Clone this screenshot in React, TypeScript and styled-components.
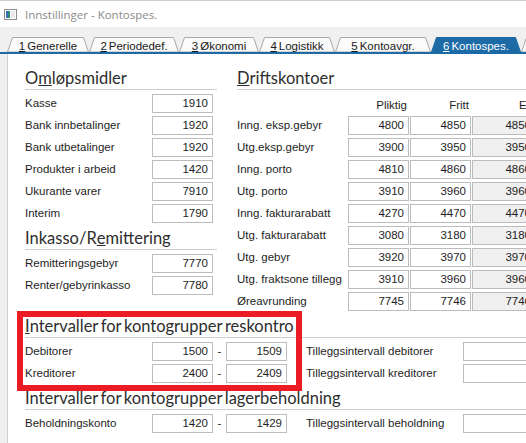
import React from 'react';
import styled, { createGlobalStyle } from 'styled-components';

const GlobalStyle = createGlobalStyle`
  html, body {
    margin: 0;
    padding: 0;
    background: #f0f0f0;
  }
  body {
    font-family: "Liberation Sans", Arial, sans-serif;
  }
`;

const BLUE = '#1c6aa6';

const Window = styled.div`
  width: 526px;
  height: 443px;
  overflow: hidden;
  background: #f0f0f0;
  display: flex;
  flex-direction: column;
`;

const TitleBar = styled.div`
  height: 26px;
  flex: none;
  background: #fff;
  border-top: 1px solid #c9ced6;
  display: flex;
  align-items: center;
  padding-left: 4px;
  gap: 8px;
  font-family: "Open Sans", "Noto Sans", sans-serif;
  font-size: 11.5px;
  color: #8a8a8a;
`;

const TabStrip = styled.div`
  height: 25px;
  flex: none;
  display: flex;
  align-items: flex-end;
  padding-left: 7px;
  border-bottom: 2px solid ${BLUE};
  white-space: nowrap;
`;

const TabShape = styled.svg`
  position: absolute;
  inset: 0;
  width: 100%;
  height: 100%;
  z-index: 0;
`;

const TabWrap = styled.div<{ $w: number; $active?: boolean }>`
  position: relative;
  width: ${(p) => p.$w}px;
  height: 15px;
  flex: none;
  display: flex;
  align-items: center;
  justify-content: center;
  font-size: 11.5px;
  color: ${(p) => (p.$active ? '#fff' : '#1a1a1a')};
  span {
    position: relative;
    z-index: 1;
    padding-top: 2px;
  }
  u {
    margin-right: 2px;
  }
`;

const Tab = ({ w, active, num, text }: { w: number; active?: boolean; num: string; text: string }) => (
  <TabWrap $w={w} $active={active}>
    <TabShape viewBox={`0 0 ${w} 15`} preserveAspectRatio="none">
      <polygon
        points={`0.5,15 5.5,0.5 ${w - 5.5},0.5 ${w - 0.5},15`}
        fill={active ? BLUE : '#fbfbfb'}
        stroke={active ? BLUE : '#a9a9a9'}
        strokeWidth="1"
      />
    </TabShape>
    <span>
      <u>{num}</u>
      {text}
    </span>
  </TabWrap>
);

const Panel = styled.div`
  flex: 1;
  background: #fff;
  margin-left: 7px;
  border-left: 1px solid #d0d0d0;
  padding: 12px 0 0 17px;
  color: #1e1e1e;
  font-size: 11.5px;
  width: 560px;
`;

const TopGrid = styled.div`
  display: flex;
  gap: 20px;
`;

const LeftCol = styled.div`
  width: 192px;
  flex: none;
`;

const RightCol = styled.div`
  flex: 1;
`;

const Heading = styled.div`
  height: 24px;
  box-sizing: border-box;
  border-bottom: 1px solid #cfcfcf;
  margin-bottom: 4px;
  font-family: Lato, "Open Sans", sans-serif;
  font-size: 16.5px;
  word-spacing: -1.5px;
  color: #2e2e2e;
  display: flex;
  align-items: flex-end;
  padding-bottom: 1px;
  white-space: pre;
`;

const Row = styled.div`
  height: 22px;
  display: flex;
  align-items: flex-start;
  white-space: nowrap;
`;

const Label = styled.div<{ $w: number }>`
  width: ${(p) => p.$w}px;
  flex: none;
  line-height: 19px;
`;

const Field = styled.div<{ $w?: number; $grey?: boolean }>`
  width: ${(p) => p.$w ?? 61}px;
  height: 19px;
  flex: none;
  box-sizing: border-box;
  border: 1px solid #bcbcbc;
  background: ${(p) => (p.$grey ? '#f0f0f0' : '#fff')};
  text-align: right;
  padding-right: 4px;
  line-height: 17px;
`;

const Cells = styled.div`
  display: flex;
  gap: 1px;
`;

const ColHead = styled.div<{ $lead?: number }>`
  width: 61px;
  flex: none;
  box-sizing: border-box;
  text-align: ${(p) => (p.$lead ? 'left' : 'right')};
  padding: 2px 2px 0 ${(p) => p.$lead ?? 0}px;
  line-height: 19px;
`;

const Dash = styled.div`
  width: 13px;
  flex: none;
  text-align: center;
  line-height: 19px;
`;

const ExtraLabel = styled.div`
  width: 157px;
  margin-left: 19px;
  flex: none;
  line-height: 19px;
`;

const Section = styled.div`
  position: relative;
`;

const Highlight = styled.div`
  position: absolute;
  left: -8px;
  top: -3px;
  width: 285px;
  height: 80px;
  box-sizing: border-box;
  border: 6px solid #ec1c24;
  pointer-events: none;
`;

const AppIcon = () => (
  <svg width="13" height="11" viewBox="0 0 13 11">
    <rect x="0.5" y="0.5" width="12" height="10" fill="#fff" stroke="#8c8c8c" />
    <rect x="2" y="2" width="4" height="7" fill="#2f8a7a" />
    <rect x="2" y="2" width="2" height="7" fill="#3d6fb8" />
    <rect x="7" y="2" width="4" height="7" fill="#e8e8e8" />
  </svg>
);

const omlop = [
  ['Kasse', '1910'],
  ['Bank innbetalinger', '1920'],
  ['Bank utbetalinger', '1920'],
  ['Produkter i arbeid', '1420'],
  ['Ukurante varer', '7910'],
  ['Interim', '1790'],
];

const inkasso = [
  ['Remitteringsgebyr', '7770'],
  ['Renter/gebyrinkasso', '7780'],
];

const drift = [
  ['Inng. eksp.gebyr', '4800', '4850', '4850'],
  ['Utg.eksp.gebyr', '3900', '3950', '3950'],
  ['Inng. porto', '4810', '4860', '4860'],
  ['Utg. porto', '3910', '3960', '3960'],
  ['Inng. fakturarabatt', '4270', '4470', '4470'],
  ['Utg. fakturarabatt', '3080', '3180', '3180'],
  ['Utg. gebyr', '3920', '3970', '3970'],
  ['Utg. fraktsone tillegg', '3910', '3960', '3960'],
  ['Øreavrunding', '7745', '7746', '7746'],
];

const tabs: [number, string, string][] = [
  [82, '1', 'Generelle'],
  [90, '2', 'Periodedef.'],
  [80, '3', 'Økonomi'],
  [76, '4', 'Logistikk'],
  [96, '5', 'Kontoavgr.'],
];

export default function App() {
  return (
    <>
      <GlobalStyle />
      <Window>
        <TitleBar>
          <AppIcon />
          Innstillinger - Kontospes.
        </TitleBar>
        <TabStrip>
          {tabs.map(([w, n, t]) => (
            <Tab key={n} w={w} num={n} text={t} />
          ))}
          <Tab w={90} num="6" text="Kontospes." active />
          <Tab w={60} num="7" text="" />
        </TabStrip>
        <Panel>
          <TopGrid>
            <LeftCol>
              <Heading>
                O<u>m</u>løpsmidler
              </Heading>
              {omlop.map(([l, v]) => (
                <Row key={l}>
                  <Label $w={127}>{l}</Label>
                  <Field>{v}</Field>
                </Row>
              ))}
              <Heading>
                Inkasso/R<u>e</u>mittering
              </Heading>
              {inkasso.map(([l, v]) => (
                <Row key={l}>
                  <Label $w={127}>{l}</Label>
                  <Field>{v}</Field>
                </Row>
              ))}
            </LeftCol>
            <RightCol>
              <Heading>
                <u>D</u>riftskontoer
              </Heading>
              <Row>
                <Label $w={111} />
                <Cells>
                  <ColHead>Pliktig</ColHead>
                  <ColHead>Fritt</ColHead>
                  <ColHead $lead={47}>Eksport</ColHead>
                </Cells>
              </Row>
              {drift.map(([l, a, b, c]) => (
                <Row key={l}>
                  <Label $w={111}>{l}</Label>
                  <Cells>
                    <Field>{a}</Field>
                    <Field>{b}</Field>
                    <Field $w={64} $grey>
                      {c}
                    </Field>
                  </Cells>
                </Row>
              ))}
            </RightCol>
          </TopGrid>
          <Section>
            <Highlight />
            <Heading>
              <u>I</u>ntervaller for kontogrupper reskontro
            </Heading>
            <Row>
              <Label $w={127}>Debitorer</Label>
              <Field>1500</Field>
              <Dash>-</Dash>
              <Field>1509</Field>
              <ExtraLabel>Tilleggsintervall debitorer</ExtraLabel>
              <Field $w={100} />
            </Row>
            <Row>
              <Label $w={127}>Kreditorer</Label>
              <Field>2400</Field>
              <Dash>-</Dash>
              <Field>2409</Field>
              <ExtraLabel>Tilleggsintervall kreditorer</ExtraLabel>
              <Field $w={100} />
            </Row>
          </Section>
          <Section>
            <Heading>Intervaller for kontogrupper lagerbeholdning</Heading>
            <Row>
              <Label $w={127}>Beholdningskonto</Label>
              <Field>1420</Field>
              <Dash>-</Dash>
              <Field>1429</Field>
              <ExtraLabel>Tilleggsintervall beholdning</ExtraLabel>
              <Field $w={100} />
            </Row>
          </Section>
        </Panel>
      </Window>
    </>
  );
}
